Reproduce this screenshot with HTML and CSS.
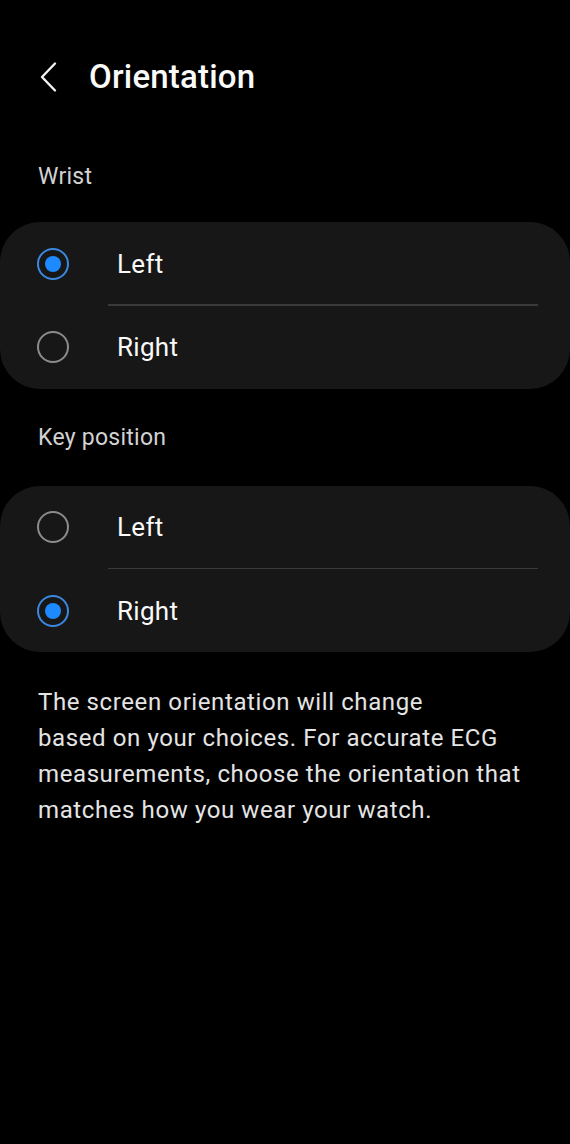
FILE: index.html
```html
<!DOCTYPE html>
<html lang="en">
<head>
<meta charset="utf-8">
<title>Orientation</title>
<link rel="stylesheet" href="styles.css">
</head>
<body>
<div class="screen">
  <header class="appbar">
    <svg class="back" width="24" height="32" viewBox="0 0 24 32" aria-hidden="true">
      <polyline points="17,2.5 4,16 17,29.5" fill="none" stroke="#f2f2f2" stroke-width="2.4" stroke-linecap="round" stroke-linejoin="round"/>
    </svg>
    <h1 class="title">Orientation</h1>
  </header>

  <div class="label label-first">Wrist</div>
  <div class="card">
    <div class="row">
      <span class="radio checked"></span>
      <span class="row-text">Left</span>
    </div>
    <div class="divider"></div>
    <div class="row">
      <span class="radio"></span>
      <span class="row-text">Right</span>
    </div>
  </div>

  <div class="label">Key position</div>
  <div class="card">
    <div class="row">
      <span class="radio"></span>
      <span class="row-text">Left</span>
    </div>
    <div class="divider"></div>
    <div class="row">
      <span class="radio checked"></span>
      <span class="row-text">Right</span>
    </div>
  </div>

  <p class="note">The screen orientation will change<br>based on your choices. For accurate ECG measurements, choose the orientation that matches how you wear your watch.</p>
</div>
</body>
</html>
```

FILE: styles.css
```css
html, body {
  margin: 0;
  padding: 0;
  background: #000;
}
body {
  font-family: Roboto, "Noto Sans", sans-serif;
  color: #fafafa;
  width: 570px;
  height: 1144px;
  overflow: hidden;
}
.screen {
  display: flex;
  flex-direction: column;
}
.appbar {
  height: 130px;
  padding-top: 47px;
  box-sizing: border-box;
  display: flex;
  align-items: flex-start;
}
.back {
  margin-left: 38px;
  margin-top: 14px;
  flex: none;
}
.title {
  margin: 0 0 0 27px;
  font-size: 33px;
  font-weight: 500;
  line-height: 60px;
  color: #fafafa;
  letter-spacing: 0.2px;
}
.label {
  height: 97px;
  display: flex;
  align-items: center;
  padding-left: 38px;
  font-size: 23px;
  letter-spacing: 0.25px;
  color: #d2d2d2;
}
.label-first {
  height: 92px;
}
.card {
  background: #171717;
  border-radius: 40px;
}
.row {
  height: 83px;
  display: flex;
  align-items: center;
}
.divider {
  height: 1.5px;
  background: #3a3a3a;
  margin: -1px 32px 0 108px;
  position: relative;
}
.radio {
  width: 28px;
  height: 28px;
  margin-left: 37px;
  border: 2px solid #8c8c8c;
  border-radius: 50%;
  flex: none;
  display: flex;
  align-items: center;
  justify-content: center;
}
.radio.checked {
  border-color: #3b88e0;
}
.radio.checked::after {
  content: "";
  width: 16px;
  height: 16px;
  border-radius: 50%;
  background: #1d8bff;
}
.row-text {
  margin-left: 48px;
  font-size: 26px;
  letter-spacing: 0.3px;
  color: #fafafa;
}
.note {
  margin: 32px 38px 0 38px;
  font-size: 24px;
  line-height: 36px;
  letter-spacing: 0.6px;
  color: #e4e4e4;
}
```
